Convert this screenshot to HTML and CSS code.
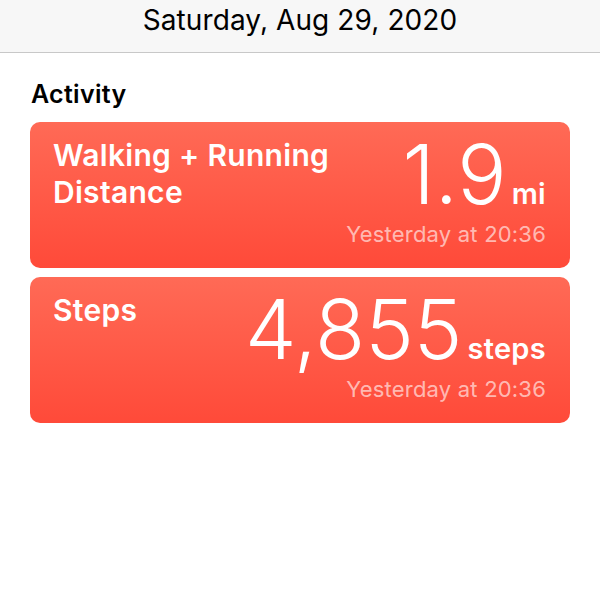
FILE: index.html
```html
<!DOCTYPE html>
<html lang="en">
<head>
    <meta charset="UTF-8">
    <meta name="viewport" content="width=device-width, initial-scale=1.0">
    <title>Health Summary</title>
    <link rel="stylesheet" href="styles.css">
</head>
<body>
    <header class="topbar">
        <h1>Saturday, Aug 29, 2020</h1>
    </header>

    <main class="content">
        <h2>Activity</h2>

        <div class="card">
            <div class="card-row">
                <div class="card-title">Walking + Running Distance</div>
                <div class="value">
                    <span class="number">1.9</span>
                    <span class="unit">mi</span>
                </div>
            </div>
            <div class="time">Yesterday at 20:36</div>
        </div>

        <div class="card">
            <div class="card-row">
                <div class="card-title">Steps</div>
                <div class="value">
                    <span class="number">4,855</span>
                    <span class="unit">steps</span>
                </div>
            </div>
            <div class="time">Yesterday at 20:36</div>
        </div>
    </main>
</body>
</html>
```

FILE: styles.css
```css
body {
    margin: 0;
    background: #fff;
    font-family: Inter, "Noto Sans", sans-serif;
    color: #000;
}
.topbar {
    background: #f7f7f7;
    border-bottom: 1px solid #c8c8c8;
    height: 52px;
    display: flex;
    justify-content: center;
    align-items: center;
}
.topbar h1 {
    margin: 0 0 12px;
    font-size: 28px;
    font-weight: 400;
    line-height: 34px;
    letter-spacing: 0.1px;
}
.content {
    padding: 0 30px;
}
.content h2 {
    margin: 26px 0 13px 1px;
    font-size: 25px;
    font-weight: 600;
    line-height: 30px;
    letter-spacing: 0.3px;
}
.card {
    background: linear-gradient(#ff6a56, #ff4a39);
    border-radius: 10px;
    color: #fff;
    padding: 15px 24px 18px 23px;
    margin-bottom: 9px;
    height: 113px;
}
.card-row {
    display: flex;
    justify-content: space-between;
    align-items: flex-start;
}
.card-title {
    font-size: 30px;
    font-weight: 600;
    line-height: 37px;
    max-width: 300px;
    letter-spacing: 0.3px;
}
.value {
    display: flex;
    align-items: baseline;
    gap: 5px;
    line-height: 66px;
    margin-top: 5px;
}
.number {
    font-size: 82px;
    font-weight: 300;
}
.unit {
    font-size: 29px;
    font-weight: 600;
    letter-spacing: 0.3px;
}
.time {
    text-align: right;
    font-size: 22px;
    letter-spacing: 0.2px;
    color: rgba(255, 255, 255, 0.62);
    margin-top: -6px;
}
```
